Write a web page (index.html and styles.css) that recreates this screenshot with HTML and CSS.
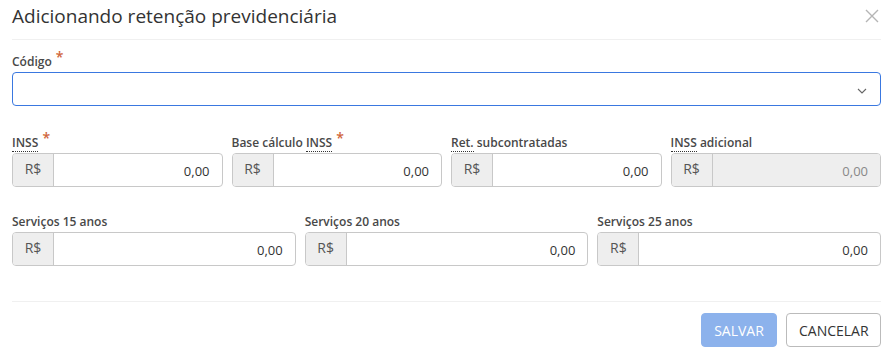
FILE: index.html
```html
<!DOCTYPE html>
<html lang="pt-BR">
<head>
    <meta charset="UTF-8">
    <meta name="viewport" content="width=device-width, initial-scale=1.0">
    <title>Adicionando retenção previdenciária</title>
    <link rel="stylesheet" href="styles.css">
</head>
<body>
    <div class="modal">
        <div class="modal-header">
            <h1>Adicionando retenção previdenciária</h1>
            <button class="close" aria-label="Fechar">
                <svg width="14" height="14" viewBox="0 0 14 14"><path d="M1 1L13 13M13 1L1 13" stroke="#b5b5b5" stroke-width="1.4" fill="none"/></svg>
            </button>
        </div>
        <div class="modal-body">
            <div class="field">
                <label>Código <span class="req">*</span></label>
                <div class="select">
                    <svg width="10" height="6" viewBox="0 0 10 6"><path d="M1 1L5 5L9 1" stroke="#666" stroke-width="1.1" fill="none"/></svg>
                </div>
            </div>

            <div class="row cols-4">
                <div class="field">
                    <label><abbr>INSS</abbr> <span class="req">*</span></label>
                    <div class="money"><span class="addon">R$</span><span class="value">0,00</span></div>
                </div>
                <div class="field">
                    <label>Base cálculo <abbr>INSS</abbr> <span class="req">*</span></label>
                    <div class="money"><span class="addon">R$</span><span class="value">0,00</span></div>
                </div>
                <div class="field">
                    <label><abbr>Ret.</abbr> subcontratadas</label>
                    <div class="money"><span class="addon">R$</span><span class="value">0,00</span></div>
                </div>
                <div class="field">
                    <label><abbr>INSS</abbr> adicional</label>
                    <div class="money disabled"><span class="addon">R$</span><span class="value">0,00</span></div>
                </div>
            </div>

            <div class="row cols-3">
                <div class="field">
                    <label>Serviços 15 anos</label>
                    <div class="money"><span class="addon">R$</span><span class="value">0,00</span></div>
                </div>
                <div class="field">
                    <label>Serviços 20 anos</label>
                    <div class="money"><span class="addon">R$</span><span class="value">0,00</span></div>
                </div>
                <div class="field">
                    <label>Serviços 25 anos</label>
                    <div class="money"><span class="addon">R$</span><span class="value">0,00</span></div>
                </div>
            </div>
        </div>
        <div class="modal-footer">
            <button class="btn btn-primary" disabled>SALVAR</button>
            <button class="btn btn-default">CANCELAR</button>
        </div>
    </div>
</body>
</html>
```

FILE: styles.css
```css
body {
    margin: 0;
    font-family: 'Open Sans', sans-serif;
    color: #333;
    background: #fff;
}
.modal {
    width: 891px;
}
.modal-header {
    display: flex;
    align-items: center;
    justify-content: space-between;
    margin: 0 10px 0 12px;
    height: 40px;
    border-bottom: 1px solid #f0f0f0;
    box-sizing: border-box;
    padding-bottom: 8px;
}
.modal-header h1 {
    margin: 0;
    font-size: 19px;
    font-weight: 400;
    line-height: 32px;
    color: #333;
}
.close {
    background: none;
    border: none;
    padding: 0;
    width: 14px;
    height: 14px;
    margin-right: 2px;
    display: flex;
}
.modal-body {
    padding: 13px 10px 0 12px;
}
.field label {
    display: block;
    font-size: 12px;
    font-weight: 600;
    color: #484848;
    line-height: 18px;
    margin-bottom: 1px;
}
abbr {
    text-decoration: none;
    border-bottom: 1px dotted #333;
}
.req {
    color: #d0653a;
    font-size: 14px;
    line-height: 0;
    position: relative;
    top: -4px;
    margin-left: 1px;
}
.select {
    height: 34px;
    box-sizing: border-box;
    border: 1px solid #3a78e0;
    border-radius: 4px;
    display: flex;
    align-items: center;
    justify-content: flex-end;
    padding-right: 13px;
    padding-top: 3px;
}
.row {
    display: grid;
    gap: 9px;
    margin-top: 28px;
}
.cols-4 {
    grid-template-columns: repeat(4, 1fr);
}
.cols-3 {
    grid-template-columns: repeat(3, 1fr);
    margin-top: 26px;
}
.money {
    display: flex;
    height: 34px;
    box-sizing: border-box;
    border: 1px solid #c8c8c8;
    border-radius: 4px;
    overflow: hidden;
    font-size: 13px;
}
.addon {
    width: 41px;
    flex: none;
    background: #eee;
    border-right: 1px solid #c8c8c8;
    color: #555;
    font-size: 14px;
    display: flex;
    align-items: center;
    justify-content: center;
    padding-bottom: 4px;
    box-sizing: border-box;
}
.value {
    flex: 1;
    display: flex;
    align-items: center;
    justify-content: flex-end;
    padding-right: 12px;
    padding-top: 2px;
    color: #333;
}
.money.disabled .value {
    background: #eee;
    color: #888;
}
.modal-footer {
    margin: 35px 10px 0 12px;
    border-top: 1px solid #f0f0f0;
    padding-top: 11px;
    display: flex;
    justify-content: flex-end;
    gap: 9px;
}
.btn {
    font-family: 'Open Sans', sans-serif;
    font-size: 14px;
    height: 34px;
    padding: 0 12px;
    border-radius: 4px;
    box-sizing: border-box;
}
.btn-primary {
    background: #8cb2ec;
    border: 1px solid #8cb2ec;
    color: #fff;
    width: 76px;
}
.btn-default {
    background: #fff;
    border: 1px solid #bbb;
    color: #333;
    width: 95px;
}
```
